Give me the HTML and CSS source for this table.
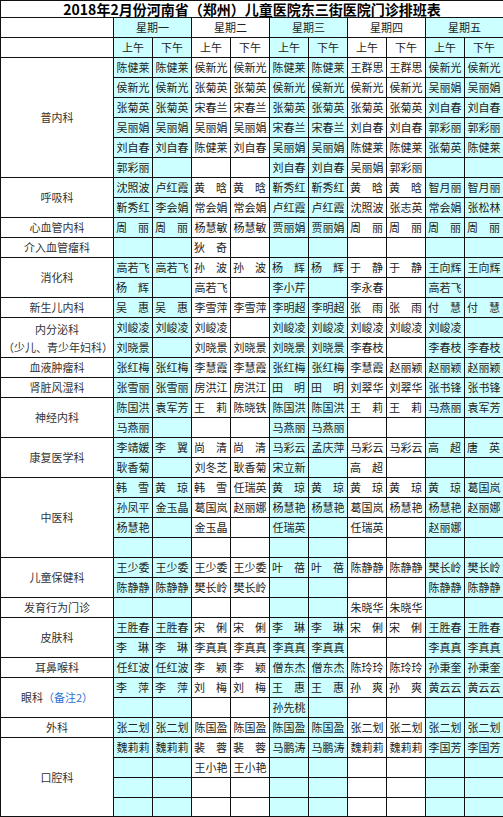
FILE: index.html
```
<!DOCTYPE html>
<html lang="zh-CN">
<head>
<meta charset="utf-8">
<title>门诊排班表</title>
<link rel="stylesheet" href="styles.css">
</head>
<body>
<table class="sched">
<colgroup>
<col class="dept"><col class="c cy"><col class="c cy"><col class="c"><col class="c"><col class="c cy"><col class="c cy"><col class="c"><col class="c"><col class="c cy"><col class="c cy">
</colgroup>
<tbody>
<tr class="title"><td colspan="11" class="ttl">2018年2月份河南省（郑州）儿童医院东三街医院门诊排班表</td></tr>
<tr class="week"><td></td><td colspan="2">星期一</td><td colspan="2">星期二</td><td colspan="2">星期三</td><td colspan="2">星期四</td><td colspan="2">星期五</td></tr>
<tr><td></td><td>上午</td><td>下午</td><td>上午</td><td>下午</td><td>上午</td><td>下午</td><td>上午</td><td>下午</td><td>上午</td><td>下午</td></tr>

<tr><td rowspan="6" class="dp">普内科</td><td>陈健莱</td><td>陈健莱</td><td>侯新光</td><td>侯新光</td><td>陈健莱</td><td>陈健莱</td><td>王群思</td><td>王群思</td><td>侯新光</td><td>侯新光</td></tr>
<tr><td>侯新光</td><td>侯新光</td><td>张菊英</td><td>张菊英</td><td>侯新光</td><td>侯新光</td><td>侯新光</td><td>侯新光</td><td>吴丽娟</td><td>吴丽娟</td></tr>
<tr><td>张菊英</td><td>张菊英</td><td>宋春兰</td><td>宋春兰</td><td>张菊英</td><td>张菊英</td><td>张菊英</td><td>张菊英</td><td>刘自春</td><td>刘自春</td></tr>
<tr><td>吴丽娟</td><td>吴丽娟</td><td>吴丽娟</td><td>吴丽娟</td><td>宋春兰</td><td>宋春兰</td><td>刘自春</td><td>刘自春</td><td>郭彩丽</td><td>郭彩丽</td></tr>
<tr><td>刘自春</td><td>刘自春</td><td>陈健莱</td><td>刘自春</td><td>吴丽娟</td><td>吴丽娟</td><td>陈健莱</td><td>陈健莱</td><td>张菊英</td><td>陈健莱</td></tr>
<tr><td>郭彩丽</td><td></td><td></td><td></td><td>刘自春</td><td>刘自春</td><td>吴丽娟</td><td>郭彩丽</td><td></td><td></td></tr>

<tr><td rowspan="2" class="dp">呼吸科</td><td>沈照波</td><td>卢红霞</td><td class="j">黄 晗</td><td class="j">黄 晗</td><td>靳秀红</td><td>靳秀红</td><td class="j">黄 晗</td><td class="j">黄 晗</td><td>智月丽</td><td>智月丽</td></tr>
<tr><td>靳秀红</td><td>李会娟</td><td>常会娟</td><td>常会娟</td><td>卢红霞</td><td>卢红霞</td><td>沈照波</td><td>张志英</td><td>常会娟</td><td>张松林</td></tr>

<tr><td class="dp">心血管内科</td><td class="j">周 丽</td><td class="j">周 丽</td><td>杨慧敏</td><td>杨慧敏</td><td>贾丽娟</td><td>贾丽娟</td><td class="j">周 丽</td><td class="j">周 丽</td><td class="j">周 丽</td><td class="j">周 丽</td></tr>

<tr><td class="dp">介入血管瘤科</td><td></td><td></td><td class="j">狄 奇</td><td></td><td></td><td></td><td></td><td></td><td></td><td></td></tr>

<tr><td rowspan="2" class="dp">消化科</td><td>高若飞</td><td>高若飞</td><td class="j">孙 波</td><td class="j">孙 波</td><td class="j">杨 辉</td><td class="j">杨 辉</td><td class="j">于 静</td><td class="j">于 静</td><td>王向辉</td><td>王向辉</td></tr>
<tr><td class="j">杨 辉</td><td></td><td>高若飞</td><td></td><td>李小芹</td><td></td><td>李永春</td><td></td><td>高若飞</td><td></td></tr>

<tr><td class="dp">新生儿内科</td><td class="j">吴 惠</td><td class="j">吴 惠</td><td>李雪萍</td><td>李雪萍</td><td>李明超</td><td>李明超</td><td class="j">张 雨</td><td class="j">张 雨</td><td class="j">付 慧</td><td class="j">付 慧</td></tr>

<tr><td rowspan="2" class="dp two">内分泌科<br>（少儿、青少年妇科）</td><td>刘峻凌</td><td>刘峻凌</td><td>刘峻凌</td><td></td><td>刘峻凌</td><td>刘峻凌</td><td>刘峻凌</td><td>刘峻凌</td><td>刘峻凌</td><td></td></tr>
<tr><td>刘晓景</td><td></td><td>刘晓景</td><td>刘晓景</td><td>刘晓景</td><td>刘晓景</td><td>李春枝</td><td></td><td>李春枝</td><td>李春枝</td></tr>

<tr><td class="dp">血液肿瘤科</td><td>张红梅</td><td>张红梅</td><td>李慧霞</td><td>李慧霞</td><td>张红梅</td><td>张红梅</td><td>李慧霞</td><td>赵丽颖</td><td>赵丽颖</td><td>赵丽颖</td></tr>

<tr><td class="dp">肾脏风湿科</td><td>张雪丽</td><td>张雪丽</td><td>房洪江</td><td>房洪江</td><td class="j">田 明</td><td class="j">田 明</td><td>刘翠华</td><td>刘翠华</td><td>张书锋</td><td>张书锋</td></tr>

<tr><td rowspan="2" class="dp">神经内科</td><td>陈国洪</td><td>袁军芳</td><td class="j">王 莉</td><td>陈晓铁</td><td>陈国洪</td><td>陈国洪</td><td class="j">王 莉</td><td class="j">王 莉</td><td>马燕丽</td><td>袁军芳</td></tr>
<tr><td>马燕丽</td><td></td><td></td><td></td><td>马燕丽</td><td>马燕丽</td><td></td><td></td><td></td><td></td></tr>

<tr><td rowspan="2" class="dp">康复医学科</td><td>李靖媛</td><td class="j">李 翼</td><td class="j">尚 清</td><td class="j">尚 清</td><td>马彩云</td><td>孟庆萍</td><td>马彩云</td><td>马彩云</td><td class="j">高 超</td><td class="j">唐 英</td></tr>
<tr><td>耿香菊</td><td></td><td>刘冬芝</td><td>耿香菊</td><td>宋立新</td><td></td><td class="j">高 超</td><td></td><td></td><td></td></tr>

<tr><td rowspan="4" class="dp">中医科</td><td class="j">韩 雪</td><td class="j">黄 琼</td><td class="j">韩 雪</td><td>任瑞英</td><td class="j">黄 琼</td><td class="j">黄 琼</td><td class="j">黄 琼</td><td class="j">黄 琼</td><td class="j">黄 琼</td><td>葛国岚</td></tr>
<tr><td>孙凤平</td><td>金玉晶</td><td>葛国岚</td><td>赵丽娜</td><td>杨慧艳</td><td>杨慧艳</td><td>葛国岚</td><td>杨慧艳</td><td>杨慧艳</td><td>赵丽娜</td></tr>
<tr><td>杨慧艳</td><td></td><td>金玉晶</td><td></td><td>任瑞英</td><td></td><td>任瑞英</td><td></td><td>赵丽娜</td><td></td></tr>
<tr><td></td><td></td><td></td><td></td><td></td><td></td><td></td><td></td><td></td><td></td></tr>

<tr><td rowspan="2" class="dp">儿童保健科</td><td>王少委</td><td>王少委</td><td>王少委</td><td>王少委</td><td class="j">叶 蓓</td><td class="j">叶 蓓</td><td>陈静静</td><td>陈静静</td><td>樊长岭</td><td>樊长岭</td></tr>
<tr><td>陈静静</td><td>陈静静</td><td>樊长岭</td><td>樊长岭</td><td></td><td></td><td></td><td></td><td>陈静静</td><td>陈静静</td></tr>

<tr><td class="dp">发育行为门诊</td><td></td><td></td><td></td><td></td><td></td><td></td><td>朱晓华</td><td>朱晓华</td><td></td><td></td></tr>

<tr><td rowspan="2" class="dp">皮肤科</td><td>王胜春</td><td>王胜春</td><td class="j">宋 俐</td><td class="j">宋 俐</td><td class="j">李 琳</td><td class="j">李 琳</td><td class="j">宋 俐</td><td class="j">宋 俐</td><td>王胜春</td><td>王胜春</td></tr>
<tr><td class="j">李 琳</td><td class="j">李 琳</td><td>李真真</td><td>李真真</td><td>李真真</td><td>李真真</td><td></td><td></td><td>李真真</td><td>李真真</td></tr>

<tr><td class="dp">耳鼻喉科</td><td>任红波</td><td>任红波</td><td class="j">李 颖</td><td class="j">李 颖</td><td>僧东杰</td><td>僧东杰</td><td>陈玲玲</td><td>陈玲玲</td><td>孙秉奎</td><td>孙秉奎</td></tr>

<tr><td rowspan="2" class="dp">眼科<span class="note">（备注2）</span></td><td class="j">李 萍</td><td class="j">李 萍</td><td class="j">刘 梅</td><td class="j">刘 梅</td><td class="j">王 惠</td><td class="j">王 惠</td><td class="j">孙 爽</td><td class="j">孙 爽</td><td>黄云云</td><td>黄云云</td></tr>
<tr><td></td><td></td><td></td><td></td><td>孙先桃</td><td></td><td></td><td></td><td></td><td></td></tr>

<tr><td class="dp">外科</td><td>张二划</td><td>张二划</td><td>陈国盈</td><td>陈国盈</td><td>陈国盈</td><td>陈国盈</td><td>张二划</td><td>张二划</td><td>张二划</td><td>张二划</td></tr>

<tr><td rowspan="4" class="dp">口腔科</td><td>魏莉莉</td><td>魏莉莉</td><td class="j">裴 蓉</td><td class="j">裴 蓉</td><td>马鹏涛</td><td>马鹏涛</td><td>魏莉莉</td><td>魏莉莉</td><td>李国芳</td><td>李国芳</td></tr>
<tr><td></td><td></td><td>王小艳</td><td>王小艳</td><td></td><td></td><td></td><td></td><td></td><td></td></tr>
<tr><td></td><td></td><td></td><td></td><td></td><td></td><td></td><td></td><td></td><td></td></tr>
<tr class="last"><td></td><td></td><td></td><td></td><td></td><td></td><td></td><td></td><td></td><td></td></tr>
</tbody>
</table>
</body>
</html>
```
FILE: styles.css
```
html, body {
  margin: 0;
  padding: 0;
  background: #fff;
}

.sched {
  border-collapse: collapse;
  table-layout: fixed;
  width: 503px;
  font-family: "Noto Sans CJK SC", "Noto Sans", sans-serif;
  font-size: 11px;
  color: #222;
}

.sched col.dept { width: 113px; }
.sched col.c { width: 39px; }
.sched col.cy { background: #ccffff; }

.sched tr { height: 20px; }
.sched tr.title { height: 17px; }
.sched tr.week { height: 20px; }
.sched tr.last { height: 19px; }

.sched td {
  border: 1px solid #111;
  padding: 0 2px;
  text-align: center;
  vertical-align: middle;
  line-height: 11px;
  overflow: hidden;
}

.sched td.j {
  text-align: justify;
  text-align-last: justify;
  padding: 0 3px 0 2px;
}

.sched td.ttl {
  background: #fff;
  font-size: 14px;
  font-weight: bold;
  color: #000;
  line-height: 15px;
  padding: 1px 0 0;
}

.sched td.dp {
  color: #333;
}

.sched td.two {
  line-height: 18px;
}

.sched .note {
  color: #2a6fd0;
}
```
